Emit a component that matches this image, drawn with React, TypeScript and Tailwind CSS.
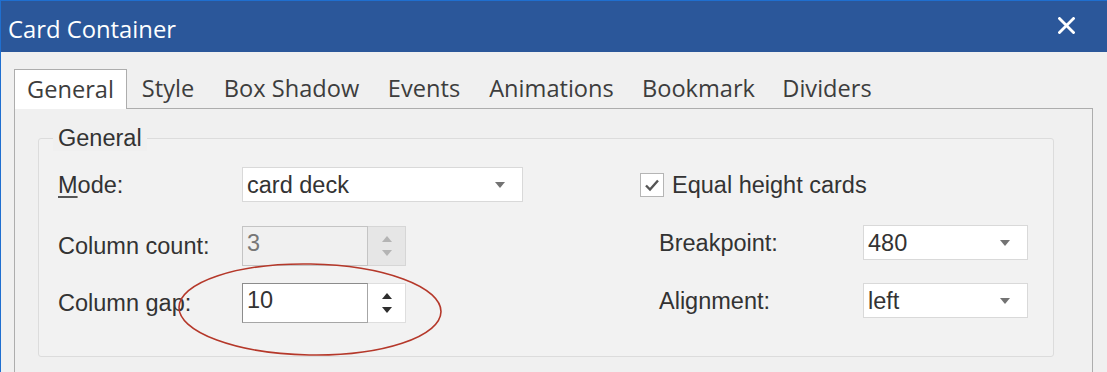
const tabs = [
  { name: "General", w: "w-[113px]" },
  { name: "Style", w: "w-[82px]" },
  { name: "Box Shadow", w: "w-[165px]" },
  { name: "Events", w: "w-[100px]" },
  { name: "Animations", w: "w-[155px]" },
  { name: "Bookmark", w: "w-[139px]" },
  { name: "Dividers", w: "w-[118px]" },
];

function Caret() {
  return (
    <svg width="10" height="6" viewBox="0 0 10 6" className="shrink-0">
      <path d="M0 0 L10 0 L5 6 Z" fill="#737373" />
    </svg>
  );
}

function Dropdown({ value, width }: { value: string; width: string }) {
  return (
    <div className={`${width} h-[35px] bg-white border border-[#d9d9d9] flex items-center justify-between pl-[4px] pr-[17px]`}>
      <span className="text-[#333] leading-[26px]">{value}</span>
      <Caret />
    </div>
  );
}

function Spinner({ value, disabled }: { value: string; disabled?: boolean }) {
  const arrow = disabled ? "#b4b4b4" : "#2e2e2e";
  return (
    <div className="flex h-[40px]">
      <div
        className={`w-[126px] h-[40px] pl-[4px] pt-[3px] leading-[26px] border ${
          disabled
            ? "bg-[#f0f0f0] border-[#c4c4c4] text-[#777]"
            : "bg-white border-[#a6a6a6] border-l-[#8c8c8c] border-t-[#8c8c8c] text-[#333]"
        }`}
      >
        {value}
      </div>
      <div
        className={`w-[38px] h-[40px] border-y border-r flex flex-col items-center justify-center gap-[8px] ${
          disabled ? "bg-[#e6e6e6] border-[#d6d6d6]" : "bg-white border-[#dedede]"
        }`}
      >
        <svg width="10" height="6" viewBox="0 0 10 6">
          <path d="M0 6 L10 6 L5 0 Z" fill={arrow} />
        </svg>
        <svg width="10" height="6" viewBox="0 0 10 6">
          <path d="M0 0 L10 0 L5 6 Z" fill={arrow} />
        </svg>
      </div>
    </div>
  );
}

export default function App() {
  return (
    <div className="relative w-[1107px] h-[372px] overflow-hidden bg-[#f0f0f0] border-l border-t border-[#1f6fd0]">
      {/* title bar */}
      <div className="h-[51px] bg-[#2b579a] flex items-center justify-between pl-[7px] pr-[32px] pt-[4px]">
        <span className="text-white text-[23.8px] font-['Open_Sans',sans-serif] leading-[28px]">Card Container</span>
        <svg width="17" height="17" viewBox="0 0 17 17" className="-mt-[7px]">
          <path d="M1.5 1.5 L15.5 15.5 M15.5 1.5 L1.5 15.5" stroke="white" strokeWidth="2.8" strokeLinecap="square" />
        </svg>
      </div>

      <div className="pl-[13px] pt-[17px] text-[23.5px] font-['Liberation_Sans',Arial,sans-serif]">
        {/* tabs */}
        <div className="w-[1079px] flex border-b border-[#adadad] h-[40px]">
          {tabs.map((t, i) => (
            <div
              key={t.name}
              className={`${t.w} flex items-center justify-center font-['Open_Sans',sans-serif] text-[23.6px] text-[#3d3d3d] ${
                i === 0 ? "bg-white border border-b-0 border-[#adadad] h-[40px] relative z-10" : "h-[39px]"
              }`}
            >
              {t.name}
            </div>
          ))}
        </div>

        {/* panel */}
        <div className="w-[1079px] h-[300px] border-x border-[#adadad] pl-[23px] pt-[29px]">
          <div className="relative w-[1016px] h-[219px] border border-[#dcdcdc] rounded-[3px] bg-[#f2f2f2]">
            <span className="absolute left-[14px] top-[-14px] px-[5px] leading-[26px] bg-[#f0f0f0] text-[#333]">
              General
            </span>

            <div className="flex pt-[28px]">
              {/* left column */}
              <div className="w-[601px] pl-[19px] text-[#333]">
                <div className="flex items-center h-[35px]">
                  <span className="w-[184px] leading-[26px]">
                    <span className="underline decoration-[#555] underline-offset-[3px]">M</span>ode:
                  </span>
                  <Dropdown value="card deck" width="w-[281px]" />
                </div>
                <div className="flex items-center h-[40px] mt-[24px]">
                  <span className="w-[184px] leading-[26px]">Column count:</span>
                  <Spinner value="3" disabled />
                </div>
                <div className="flex items-center h-[40px] mt-[17px]">
                  <span className="w-[184px] leading-[26px]">Column gap:</span>
                  <Spinner value="10" />
                </div>
              </div>

              {/* right column */}
              <div className="text-[#333]">
                <div className="flex items-center h-[35px]">
                  <div className="w-[24px] h-[24px] bg-white border border-[#b5b5b5] flex items-center justify-center">
                    <svg width="16" height="14" viewBox="0 0 16 14">
                      <path d="M2 7.5 L6 11.5 L14 2.5" stroke="#555" strokeWidth="2.4" fill="none" />
                    </svg>
                  </div>
                  <span className="ml-[8px] leading-[26px]">Equal height cards</span>
                </div>
                <div className="flex items-center h-[35px] mt-[23px]">
                  <span className="w-[223px] pl-[19px] leading-[26px]">Breakpoint:</span>
                  <Dropdown value="480" width="w-[165px]" />
                </div>
                <div className="flex items-center h-[35px] mt-[23px]">
                  <span className="w-[223px] pl-[19px] leading-[26px]">Alignment:</span>
                  <Dropdown value="left" width="w-[165px]" />
                </div>
              </div>
            </div>
          </div>
        </div>
      </div>

      {/* annotation ellipse */}
      <svg className="absolute left-0 top-0 pointer-events-none" width="1107" height="372">
        <ellipse
          cx="309"
          cy="308.5"
          rx="131"
          ry="45.5"
          fill="none"
          stroke="#b5382a"
          strokeWidth="1.6"
          transform="rotate(1 309 308.5)"
        />
      </svg>
    </div>
  );
}
